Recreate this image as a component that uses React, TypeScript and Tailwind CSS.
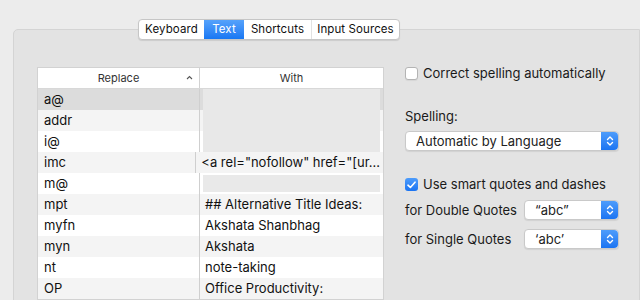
import React from 'react';

const font = "font-['Inter','Liberation_Sans',sans-serif]";

const rows = [
  { key: 'a@', value: '' },
  { key: 'addr', value: '' },
  { key: 'i@', value: '' },
  { key: 'imc', value: '<a rel="nofollow" href="[ur...' },
  { key: 'm@', value: '' },
  { key: 'mpt', value: '## Alternative Title Ideas:' },
  { key: 'myfn', value: 'Akshata Shanbhag' },
  { key: 'myn', value: 'Akshata' },
  { key: 'nt', value: 'note-taking' },
  { key: 'OP', value: 'Office Productivity:' },
];

const Stepper = () => (
  <div className="flex h-full w-[17px] items-center justify-center rounded-r-[4px] bg-gradient-to-b from-[#4d9cfb] to-[#1a74f2]">
    <svg width="8" height="12" viewBox="0 0 8 12" fill="none" stroke="white" strokeWidth="1.4" strokeLinecap="round" strokeLinejoin="round">
      <path d="M1.5 4.5 L4 2 L6.5 4.5" />
      <path d="M1.5 7.5 L4 10 L6.5 7.5" />
    </svg>
  </div>
);

const Popup = ({ label, width }: { label: string; width: string }) => (
  <div className={`flex h-[20px] ${width} items-center rounded-[4px] border border-[#c9c9c9] bg-white shadow-[0_1px_1px_rgba(0,0,0,0.08)]`}>
    <span className="flex-1 pl-[10px] text-[13px] leading-none text-[#222]">{label}</span>
    <Stepper />
  </div>
);

const Tabs = () => {
  const tabs = [
    { name: 'Keyboard', w: 'w-[65px]' },
    { name: 'Text', w: 'w-[40px]' },
    { name: 'Shortcuts', w: 'w-[67px]' },
    { name: 'Input Sources', w: 'w-[88px]' },
  ];
  return (
    <div className="relative z-10 flex pl-[138px]">
      <div className="flex h-[21px] overflow-hidden rounded-[4px] border border-[#c6c6c6] bg-white shadow-[0_1px_1px_rgba(0,0,0,0.1)]">
        {tabs.map((t, i) => (
          <div
            key={t.name}
            className={`flex items-center justify-center text-[11.5px] leading-none tracking-[0.1px] ${t.w} ${
              t.name === 'Text'
                ? 'bg-gradient-to-b from-[#55a2fb] to-[#1677f3] text-white'
                : 'text-[#111]'
            } ${i > 0 && t.name !== 'Text' && tabs[i - 1].name !== 'Text' ? 'border-l border-[#e2e2e2]' : ''}`}
          >
            {t.name}
          </div>
        ))}
      </div>
    </div>
  );
};

const Checkbox = ({ checked }: { checked?: boolean }) =>
  checked ? (
    <div className="flex h-[13px] w-[13px] items-center justify-center rounded-[3px] bg-gradient-to-b from-[#4d9cfb] to-[#1a74f2]">
      <svg width="9" height="8" viewBox="0 0 9 8" fill="none" stroke="white" strokeWidth="1.6" strokeLinecap="round" strokeLinejoin="round">
        <path d="M1 4.2 L3.4 6.5 L8 1.2" />
      </svg>
    </div>
  ) : (
    <div className="h-[13px] w-[13px] rounded-[3px] border border-[#b4b4b4] bg-white shadow-[0_1px_1px_rgba(0,0,0,0.06)]" />
  );

const ReplaceTable = () => (
  <div className="flex w-[347px] flex-col border border-[#d2d2d2] bg-white">
    <div className="flex h-[21px] border-b border-[#d8d8d8] text-[11px] text-[#333]">
      <div className="relative flex w-[162px] items-center justify-center border-r border-[#d2d2d2]">
        Replace
        <svg className="absolute right-[6px] top-[7px]" width="7" height="5" viewBox="0 0 7 5" fill="none" stroke="#555" strokeWidth="1.1">
          <path d="M1 4 L3.5 1.5 L6 4" />
        </svg>
      </div>
      <div className="flex flex-1 items-center justify-center">With</div>
    </div>
    {rows.map((r, i) => {
      const bg = i === 0 ? 'bg-[#dcdcdc]' : i % 2 === 1 ? 'bg-[#f4f4f4]' : 'bg-white';
      return (
        <div key={r.key} className={`flex h-[21px] text-[13px] text-[#111] ${bg}`}>
          <div className="flex w-[162px] items-center border-r border-[#cfcfcf] pl-[6px]">{r.key}</div>
          <div className="flex flex-1 items-center pl-[3px] pr-[3px]">
            {i < 3 ? (
              <div className={`h-full w-full bg-[#e8e8e8] ${i === 2 ? 'mb-[1px]' : ''}`} />
            ) : i === 4 ? (
              <div className="h-[17px] w-full bg-[#e9e9e9]" />
            ) : (
              <span className="truncate pl-[2px]">{r.value}</span>
            )}
          </div>
        </div>
      );
    })}
  </div>
);

export default function App() {
  return (
    <div className={`h-[300px] w-[640px] overflow-hidden bg-[#ececec] pt-[19px] ${font}`}>
      <Tabs />
      <div className="-mt-[11px] ml-[13px] h-[300px] rounded-tl-[5px] border border-[#d4d4d4] bg-[#e3e3e3] pl-[23px] pt-[37px]">
        <div className="flex gap-[21px]">
          <ReplaceTable />
          <div className="flex flex-col text-[13px] text-[#1a1a1a]">
            <div className="flex h-[13px] items-center gap-[5px]">
              <Checkbox />
              <span className="leading-none">Correct spelling automatically</span>
            </div>
            <div className="mt-[30px] leading-none">Spelling:</div>
            <div className="mt-[8px]">
              <Popup label="Automatic by Language" width="w-[214px]" />
            </div>
            <div className="mt-[27px] flex h-[13px] items-center gap-[5px]">
              <Checkbox checked />
              <span className="leading-none">Use smart quotes and dashes</span>
            </div>
            <div className="mt-[9px] flex items-center">
              <span className="w-[119px] leading-none">for Double Quotes</span>
              <Popup label={'\u201Cabc\u201D'} width="w-[95px]" />
            </div>
            <div className="mt-[9px] flex items-center">
              <span className="w-[119px] leading-none">for Single Quotes</span>
              <Popup label={'\u2018abc\u2019'} width="w-[95px]" />
            </div>
          </div>
        </div>
      </div>
    </div>
  );
}
